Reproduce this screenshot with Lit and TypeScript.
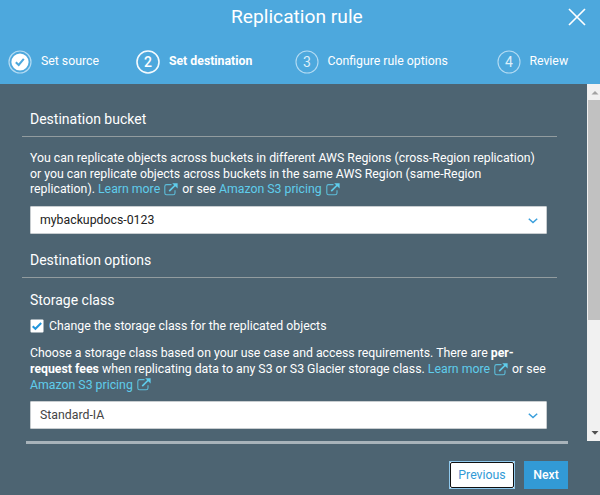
import { LitElement, html, svg, css } from "lit";
import { customElement } from "lit/decorators.js";

const external = html`<svg class="ext" viewBox="0 0 14 13" width="14" height="13">
  <path d="M7.5 1.6H2.6Q.8 1.6 .8 3.4V10Q.8 11.8 2.6 11.8H9.2Q11 11.8 11 10V7.2" fill="none" stroke="currentColor" stroke-width="1.1" opacity=".85"/>
  <path d="M5.2 8.2L11.4 2" fill="none" stroke="currentColor" stroke-width="1.7"/>
  <path d="M8.2 .2H13.6V5.4Z" fill="currentColor"/></svg>`;

const chevron = html`<svg class="chev" viewBox="0 0 10 6" width="10" height="6">
  <path d="M.8 .8L5 4.6L9.2 .8" fill="none" stroke="#3a9fdc" stroke-width="1.5"/></svg>`;

@customElement("app-root")
export class AppRoot extends LitElement {
  static styles = css`
    :host { display: flex; flex-direction: column; width: 600px; height: 495px; overflow: hidden;
      background: #4d6472; color: #fff; font: 12.3px/15.5px Roboto, "Liberation Sans", sans-serif; white-space: nowrap; }
    * { box-sizing: border-box; }
    svg { display: block; flex: none; }
    header { height: 84px; flex: none; background: #4da8dd; }
    .top { height: 34px; display: grid; grid-template-columns: 231px 1fr 33px; align-items: center; }
    .title { font-size: 19.2px; line-height: 24px; grid-column: 2; margin-top: -1px; }
    .close { grid-column: 3; margin-left: 1px; }
    .steps { display: grid; grid-template-columns: 128px 158.5px 202px 1fr; padding-left: 8.4px; margin-top: 15px; }
    .step { display: flex; align-items: center; gap: 8.5px; height: 25px; }
    .badge { width: 24px; height: 24px; flex: none; }
    .badge text { font: 14px Roboto, sans-serif; fill: #dceffa; text-anchor: middle; }
    .step.active { font-weight: 700; }
    .step.active text { font-weight: 500; fill: #fff; }
    .label { margin-top: 1px; }
    .body { display: flex; height: 357px; flex: none; }
    .content { width: 587px; padding-left: 22px; }
    h2, h3, p { margin: 0; font-weight: 400; }
    h2 { width: 535px; height: 53px; padding: 26px 0 0 8px; border-bottom: 1px solid #929c9f; font-size: 14px; line-height: 18px; }
    h2.second { height: 44px; padding-top: 17px; }
    h3 { padding-left: 8px; margin-top: 13px; font-size: 14px; line-height: 18px; }
    p { padding-left: 8px; margin-top: 14px; }
    .check + p { margin-top: 12.5px; }
    .line { display: flex; height: 15.6px; align-items: center; white-space: pre; }
    .link { color: #5fcdec; }
    .ext { color: #5fcdec; margin: -1px 1px 0 4px; }
    .select { margin: 8px 0 0 8px; width: 517px; height: 28px; background: #fff; border: 1px solid #c8cdd0; border-radius: 1px;
      display: flex; align-items: center; justify-content: space-between; padding: 1.5px 8px 0 9px; color: #222; }
    .select.muted { color: #444; }
    .check { display: flex; align-items: center; gap: 5px; height: 15px; padding-left: 8px; margin-top: 10px; }
    .bar { width: 13px; height: 357px; background: #f1f1f1; display: flex; flex-direction: column; }
    .thumb { height: 220px; margin-left: 1px; background: #c1c1c1; }
    .grow { flex: 1; }
    footer { width: 542px; margin-left: 26px; border-top: 3px solid #a8b3ba; display: flex; justify-content: flex-end; gap: 9px; padding-top: 17px; }
    .btn { height: 28px; width: 44px; background: #329ad6; display: flex; align-items: center; justify-content: center; font-weight: 500; padding-top: 1px; }
    .prev { width: 66px; background: #fff; color: #329ad6; border: 1px solid #8fc9ee; padding: 0; font-weight: 400; }
    .ring { display: flex; align-items: center; justify-content: center; width: 64px; height: 26px; border: 1px solid #111; border-radius: 2px; padding-top: 1px; }
  `;

  step(n: number, label: string) {
    const mark = n === 1
      ? svg`<circle cx="12" cy="12" r="11" fill="none" stroke="#b3dbf3" stroke-width="1.2"/>
          <circle cx="12" cy="12" r="8.6" fill="#fff"/>
          <path d="M7.8 12.2L10.7 15L15.8 8.8" fill="none" stroke="#4da8dd" stroke-width="2"/>`
      : svg`<circle cx="12" cy="12" r="11" fill="none" stroke="${n === 2 ? "#f4fafe" : "#b3dbf3"}" stroke-width="${n === 2 ? 1.6 : 1.1}"/>
          <text x="12" y="17">${n}</text>`;
    return html`<div class="step ${n === 2 ? "active" : ""}">
      <svg class="badge" viewBox="0 0 24 24">${mark}</svg><span class="label">${label}</span></div>`;
  }

  render() {
    return html`
      <header>
        <div class="top">
          <div class="title">Replication rule</div>
          <svg class="close" width="18" height="18" viewBox="0 0 18 18"><path d="M1 1L17 17M17 1L1 17" stroke="#fff" stroke-width="1.7"/></svg>
        </div>
        <div class="steps">
          ${this.step(1, "Set source")}${this.step(2, "Set destination")}
          ${this.step(3, "Configure rule options")}${this.step(4, "Review")}
        </div>
      </header>
      <div class="body">
        <div class="content">
          <h2>Destination bucket</h2>
          <p>
            <span class="line">You can replicate objects across buckets in different AWS Regions (cross-Region replication)</span>
            <span class="line">or you can replicate objects across buckets in the same AWS Region (same-Region</span>
            <span class="line"><span>replication). </span><span class="link">Learn more</span>${external}<span>&nbsp;or see </span><span class="link">Amazon S3 pricing</span>${external}</span>
          </p>
          <div class="select"><span>mybackupdocs-0123</span>${chevron}</div>
          <h2 class="second">Destination options</h2>
          <h3>Storage class</h3>
          <div class="check">
            <svg width="14" height="14" viewBox="0 0 14 14"><rect x=".5" y=".5" width="13" height="13" rx="1" fill="#fff"/><path d="M2.7 7.2L5.4 9.8L11.2 4" fill="none" stroke="#2196dc" stroke-width="2"/></svg>
            <span>Change the storage class for the replicated objects</span>
          </div>
          <p>
            <span class="line"><span>Choose a storage class based on your use case and access requirements. There are </span><b>per-</b></span>
            <span class="line"><b>request fees</b><span> when replicating data to any S3 or S3 Glacier storage class. </span><span class="link">Learn more</span>${external}<span>&nbsp;or see</span></span>
            <span class="line"><span class="link">Amazon S3 pricing</span>${external}</span>
          </p>
          <div class="select muted"><span>Standard-IA</span>${chevron}</div>
        </div>
        <div class="bar">
          <svg width="13" height="16" viewBox="0 0 13 16"><path d="M4.5 10.5L8 7L11.5 10.5Z" fill="#a3a3a3"/></svg>
          <div class="thumb"></div><div class="grow"></div>
          <svg width="13" height="16" viewBox="0 0 13 16"><path d="M4.5 6L8 9.8L11.5 6Z" fill="#505050"/></svg>
        </div>
      </div>
      <footer><div class="btn prev"><span class="ring">Previous</span></div><div class="btn">Next</div></footer>`;
  }
}
